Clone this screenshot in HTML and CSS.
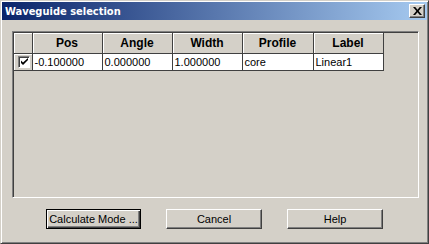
FILE: index.html
```html
<!DOCTYPE html>
<html lang="en">
<head>
  <meta charset="UTF-8" />
  <title>Waveguide selection</title>
  <link rel="stylesheet" href="styles.css">
</head>
<body>
  <div class="window">
    <div class="titlebar">
      <span class="title">Waveguide selection</span>
      <div class="close-btn">
        <svg width="9" height="8" viewBox="0 0 9 8">
          <path d="M0 0h2.2l2.3 2.8L6.8 0H9L5.6 4 9 8H6.8L4.5 5.2 2.2 8H0l3.4-4z" fill="#000" />
        </svg>
      </div>
    </div>

    <div class="grid-panel">
      <table class="grid">
        <tr class="grid-head">
          <th class="col-check"></th>
          <th class="col">Pos</th>
          <th class="col">Angle</th>
          <th class="col">Width</th>
          <th class="col col-wide">Profile</th>
          <th class="col">Label</th>
        </tr>
        <tr class="grid-row">
          <td class="cell-check">
            <span class="checkbox">
              <svg width="7" height="7" viewBox="0 0 7 7">
                <path d="M0 2.5v2.5l2 2 5-5V0L2 4.5z" fill="#000" />
              </svg>
            </span>
          </td>
          <td>-0.100000</td>
          <td>0.000000</td>
          <td>1.000000</td>
          <td>core</td>
          <td>Linear1</td>
        </tr>
      </table>
    </div>

    <div class="buttons">
      <button class="btn btn-default">Calculate Mode ...</button>
      <button class="btn">Cancel</button>
      <button class="btn">Help</button>
    </div>
  </div>
</body>
</html>
```

FILE: styles.css
```css
:root {
  --face: #d4d0c8;
  --shadow: #808080;
  --dark: #404040;
  --light: #ffffff;
}

* {
  box-sizing: border-box;
  margin: 0;
  padding: 0;
}

body {
  width: 429px;
  height: 244px;
  background: var(--face);
  font-family: 'Liberation Sans', Arial, sans-serif;
  font-size: 11px;
  color: #000;
  overflow: hidden;
}

.window {
  width: 429px;
  height: 244px;
  display: flex;
  flex-direction: column;
  padding: 1px;
  border-top: 1px solid var(--face);
  border-left: 1px solid var(--face);
  border-right: 1px solid var(--dark);
  border-bottom: 1px solid var(--dark);
  box-shadow: inset 1px 1px 0 var(--light), inset -1px -1px 0 var(--shadow);
}

.titlebar {
  height: 18px;
  display: flex;
  align-items: center;
  justify-content: space-between;
  padding: 0 2px 0 3px;
  background: linear-gradient(to right, #0a246a, #a6caf0);
}

.title {
  color: #fff;
  font-family: 'DejaVu Sans', 'Liberation Sans', sans-serif;
  font-stretch: condensed;
  font-weight: bold;
  font-size: 11px;
}

.close-btn {
  width: 16px;
  height: 14px;
  display: flex;
  align-items: center;
  justify-content: center;
  background: var(--face);
  border-top: 1px solid var(--light);
  border-left: 1px solid var(--light);
  border-right: 1px solid var(--dark);
  border-bottom: 1px solid var(--dark);
  box-shadow: inset -1px -1px 0 var(--shadow);
}

.grid-panel {
  height: 167px;
  margin: 11px 8px 0 10px;
  border-top: 1px solid var(--shadow);
  border-left: 1px solid var(--shadow);
  border-right: 1px solid var(--light);
  border-bottom: 1px solid var(--light);
  box-shadow: inset 1px 1px 0 var(--dark), inset -1px -1px 0 var(--face);
  padding: 1px;
}

.grid {
  border-collapse: collapse;
  table-layout: fixed;
}

.grid th,
.grid td {
  padding: 0;
  overflow: hidden;
  white-space: nowrap;
}

.grid-head th {
  height: 20px;
  background: var(--face);
  font-weight: bold;
  font-size: 12px;
  text-align: center;
  border-right: 1px solid var(--dark);
  border-bottom: 1px solid var(--dark);
  box-shadow: inset 1px 1px 0 var(--light);
}

.col-check {
  width: 18px;
}

.col {
  width: 70px;
}

.col-wide {
  width: 71px;
}

.grid-row td {
  height: 17px;
  background: #fff;
  padding-left: 2px;
  border-right: 1px solid var(--dark);
  border-bottom: 1px solid var(--dark);
}

.grid-row .cell-check {
  background: var(--face);
  padding-left: 4px;
  box-shadow: inset 1px 1px 0 var(--light);
}

.checkbox {
  width: 12px;
  height: 12px;
  display: flex;
  align-items: center;
  justify-content: center;
  background: #fff;
  border-top: 1px solid var(--shadow);
  border-left: 1px solid var(--shadow);
  border-right: 1px solid var(--light);
  border-bottom: 1px solid var(--light);
  box-shadow: inset 1px 1px 0 var(--dark);
}

.buttons {
  display: flex;
  justify-content: center;
  gap: 25px;
  margin-top: 11px;
}

.btn {
  width: 96px;
  height: 20px;
  font-family: inherit;
  font-size: 11px;
  background: var(--face);
  border-top: 1px solid var(--light);
  border-left: 1px solid var(--light);
  border-right: 1px solid var(--dark);
  border-bottom: 1px solid var(--dark);
  box-shadow: inset -1px -1px 0 var(--shadow);
}

.btn-default {
  width: 95px;
  border: 1px solid #000;
  box-shadow: inset 1px 1px 0 var(--light), inset -1px -1px 0 var(--dark), inset -2px -2px 0 var(--shadow);
}
```
